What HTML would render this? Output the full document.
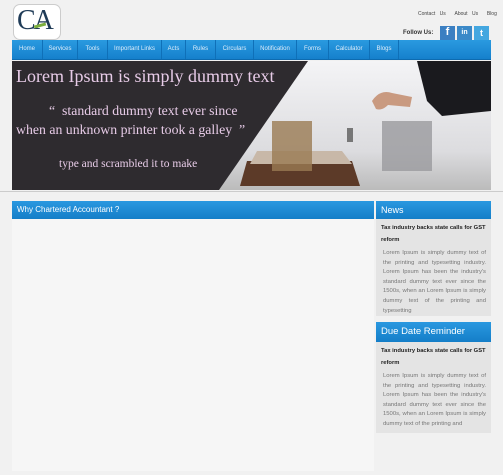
<!DOCTYPE html><html><head><style>
body{margin:0;width:503px;height:475px;background:#f1f1f1;font-family:"Liberation Sans",sans-serif;position:relative;overflow:hidden}
.a{position:absolute}
.nav{left:12px;top:40px;width:479px;height:19px;background:linear-gradient(#2a9ae0,#1580cc);border-bottom:1px solid #0d6bb0}
.nav span{float:left;color:#dfeefa;font-size:6px;line-height:19px;text-align:center;border-right:1px solid #0f70b8;box-sizing:border-box}
.hd{background:linear-gradient(#2a98e0,#147ec8);color:#fff}
.box{background:#e4e4e4}
.t{font-size:5.8px;color:#222;font-weight:bold;line-height:12px;padding:3px 5px 0}
.p{font-size:5.9px;color:#777;line-height:9.6px;text-align:justify;padding:3px 5px 0 7px}
</style></head><body>
<div class="a" style="left:13px;top:4px;width:46px;height:34px;background:#fff;border:1px solid #ccc;border-radius:7px"></div>
<div class="a" style="left:17px;top:5px;font:28px 'Liberation Serif',serif;color:#1f3b57;letter-spacing:-2px">CA</div>
<div class="a" style="left:34px;top:24px;width:12px;height:3px;background:#7cae3c;transform:rotate(-15deg)"></div>
<div class="a" style="left:418px;top:11px;font-size:5px;color:#444;word-spacing:3px">Contact Us &nbsp;About Us &nbsp;Blog</div>
<div class="a" style="left:403px;top:30px;font-size:6px;font-weight:bold;color:#333">Follow Us:</div>
<div class="a" style="left:440px;top:26px;width:15px;height:14px;background:#3b7fc2;color:#fff;font:bold 11px sans-serif;text-align:center">f</div>
<div class="a" style="left:457px;top:26px;width:15px;height:14px;background:#3b89c8;color:#fff;font:bold 7px sans-serif;text-align:center;line-height:14px">in</div>
<div class="a" style="left:474px;top:26px;width:15px;height:14px;background:#44a7e0;color:#fff;font:bold 9px sans-serif;text-align:center;line-height:14px">t</div>
<div class="a nav"><span style="width:31px">Home</span><span style="width:35px">Services</span><span style="width:30px">Tools</span><span style="width:54px">Important Links</span><span style="width:24px">Acts</span><span style="width:30px">Rules</span><span style="width:38px">Circulars</span><span style="width:43px">Notification</span><span style="width:32px">Forms</span><span style="width:41px">Calculator</span><span style="width:29px">Blogs</span></div>
<svg class="a" style="left:12px;top:61px" width="479" height="129">
<defs><linearGradient id="g" x1="0" y1="0" x2="0" y2="1"><stop offset="0" stop-color="#f4f4f6"/><stop offset="0.7" stop-color="#dcdcdf"/><stop offset="1" stop-color="#bbb"/></linearGradient></defs>
<rect width="479" height="129" fill="url(#g)"/>
<polygon points="0,0 296,0 207,129 0,129" fill="#2e2b2f"/>
<path d="M405,0 L479,0 L479,50 L430,55 L415,40 Z" fill="#1a1a1e"/>
<path d="M360,40 q8,-12 20,-8 l20,4 -2,10 -22,-2 q-6,6 -12,4 z" fill="#c99a80"/>
<polygon points="235,100 340,100 348,125 228,125" fill="#5c3a28"/>
<polygon points="245,90 330,90 340,103 238,103" fill="#c8b8a8"/>
<rect x="260" y="60" width="40" height="50" fill="#9a7a52" opacity=".8"/>
<rect x="370" y="60" width="50" height="50" fill="#9a9a9e" opacity=".8"/>
<rect x="335" y="67" width="6" height="14" fill="#777"/>
</svg>
<div class="a" style="left:16px;top:66px;font:18px 'Liberation Serif',serif;color:#e7cbe7">Lorem Ipsum is simply dummy text</div>
<div class="a" style="left:49px;top:103px;font:13.8px 'Liberation Serif',serif;color:#e7cbe7">“&nbsp; standard dummy text ever since</div>
<div class="a" style="left:16px;top:122px;font:13.8px 'Liberation Serif',serif;color:#e7cbe7">when an unknown printer took a galley &nbsp;”</div>
<div class="a" style="left:59px;top:158px;font:11.5px 'Liberation Serif',serif;color:#e7cbe7">type and scrambled it to make</div>
<div class="a" style="left:0;top:191px;width:503px;height:1px;background:#ccc"></div>
<div class="a" style="left:12px;top:201px;width:362px;height:270px;background:#f6f6f6"></div>
<div class="a hd" style="left:12px;top:201px;width:362px;height:18px;font-size:8px;line-height:18px;padding-left:5px;box-sizing:border-box">Why Chartered Accountant ?</div>
<div class="a box" style="left:376px;top:201px;width:115px;height:115px;overflow:hidden"><div class="hd" style="height:18px;font-size:9px;line-height:18px;padding-left:5px">News</div><div class="t">Tax industry backs state calls for GST reform</div><div class="p">Lorem Ipsum is simply dummy text of the printing and typesetting industry. Lorem Ipsum has been the industry's standard dummy text ever since the 1500s, when an Lorem Ipsum is simply dummy text of the printing and typesetting</div></div>
<div class="a box" style="left:376px;top:322px;width:115px;height:111px;overflow:hidden"><div class="hd" style="height:20px;font-size:9.5px;line-height:20px;padding-left:5px">Due Date Reminder</div><div class="t">Tax industry backs state calls for GST reform</div><div class="p">Lorem Ipsum is simply dummy text of the printing and typesetting industry. Lorem Ipsum has been the industry's standard dummy text ever since the 1500s, when an Lorem Ipsum is simply dummy text of the printing and</div></div>
</body></html>
